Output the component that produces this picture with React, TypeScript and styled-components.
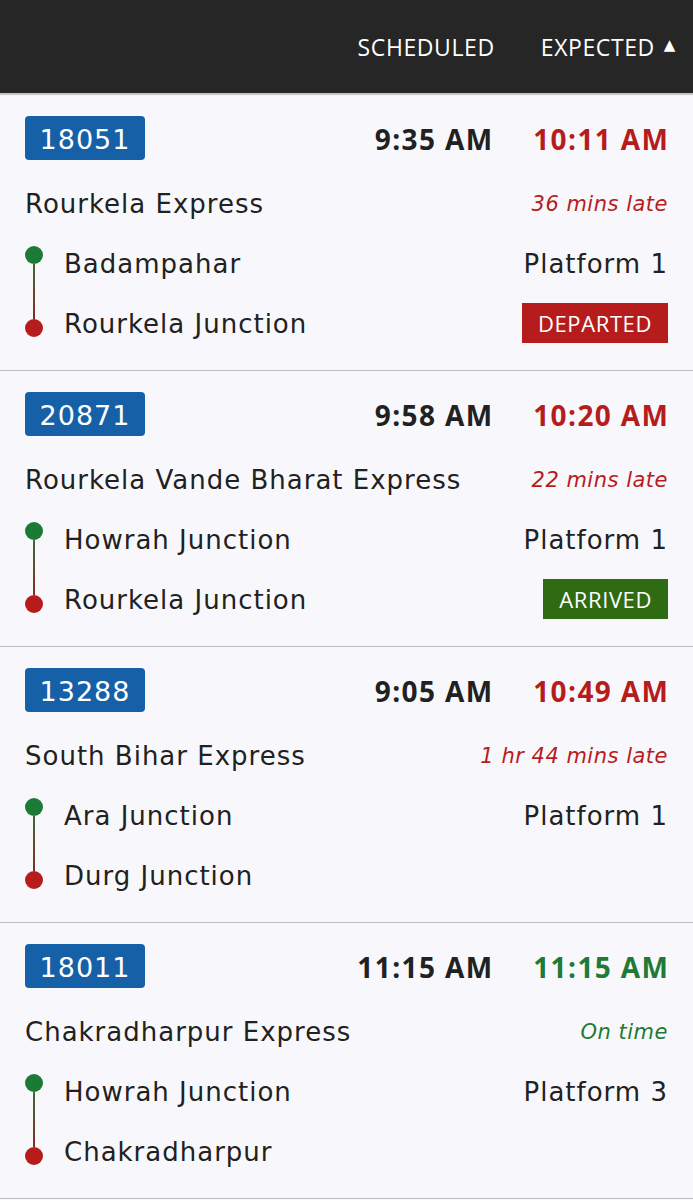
import React, { FC } from "react";
import styled, { createGlobalStyle } from "styled-components";

type Status = "departed" | "arrived" | null;

interface train {
  number: string;
  name: string;
  scheduled: string;
  expected: string;
  onTime: boolean;
  delay: string;
  from: string;
  to: string;
  platform: string;
  status: Status;
}

const trains: train[] = [
  {
    number: "18051",
    name: "Rourkela Express",
    scheduled: "9:35 AM",
    expected: "10:11 AM",
    onTime: false,
    delay: "36 mins late",
    from: "Badampahar",
    to: "Rourkela Junction",
    platform: "Platform 1",
    status: "departed",
  },
  {
    number: "20871",
    name: "Rourkela Vande Bharat Express",
    scheduled: "9:58 AM",
    expected: "10:20 AM",
    onTime: false,
    delay: "22 mins late",
    from: "Howrah Junction",
    to: "Rourkela Junction",
    platform: "Platform 1",
    status: "arrived",
  },
  {
    number: "13288",
    name: "South Bihar Express",
    scheduled: "9:05 AM",
    expected: "10:49 AM",
    onTime: false,
    delay: "1 hr 44 mins late",
    from: "Ara Junction",
    to: "Durg Junction",
    platform: "Platform 1",
    status: null,
  },
  {
    number: "18011",
    name: "Chakradharpur Express",
    scheduled: "11:15 AM",
    expected: "11:15 AM",
    onTime: true,
    delay: "On time",
    from: "Howrah Junction",
    to: "Chakradharpur",
    platform: "Platform 3",
    status: null,
  },
];

const App: FC = () => {
  return (
    <>
      <GlobalStyle />
      <StHeader>
        <span>SCHEDULED</span>
        <StSort>
          EXPECTED <StArrow>▲</StArrow>
        </StSort>
      </StHeader>

      {trains.map((t) => (
        <StCard key={t.number}>
          <StRow $height={44}>
            <StNumber>{t.number}</StNumber>
            <StTimes>
              <StTime>{t.scheduled}</StTime>
              <StTime $color={t.onTime ? "#1e7a34" : "#b71c1c"}>
                {t.expected}
              </StTime>
            </StTimes>
          </StRow>

          <StRow $height={40} $top={23}>
            <StName>{t.name}</StName>
            <StDelay $color={t.onTime ? "#1e7a34" : "#b71c1c"}>{t.delay}</StDelay>
          </StRow>

          <StRoute>
            <StTrack>
              <StDot $color="#1b7a36" />
              <StLine />
              <StDot $color="#b71c1c" />
            </StTrack>
            <StStops>
              <StRow $height={40}>
                <StStation>{t.from}</StStation>
                <StStation>{t.platform}</StStation>
              </StRow>
              <StRow $height={40}>
                <StStation>{t.to}</StStation>
                {t.status === "departed" && (
                  <StStatus $bg="#b71c1c">DEPARTED</StStatus>
                )}
                {t.status === "arrived" && (
                  <StStatus $bg="#2e6b12">ARRIVED</StStatus>
                )}
              </StRow>
            </StStops>
          </StRoute>
        </StCard>
      ))}
    </>
  );
};

export default App;

const GlobalStyle = createGlobalStyle`
  body {
    margin: 0;
    background: #f8f8fc;
    font-family: "DejaVu Sans", "Open Sans", sans-serif;
    color: #212121;
  }
`;

const StHeader = styled.div`
  height: 93px;
  background-color: #262626;
  border-bottom: 2px solid #c4c4c4;
  display: flex;
  justify-content: flex-end;
  align-items: center;
  gap: 46px;
  padding-right: 17px;
  color: #ffffff;
  font-family: "Open Sans", sans-serif;
  font-size: 23px;
  letter-spacing: 0.6px;
`;

const StSort = styled.span`
  display: flex;
  align-items: center;
`;

const StArrow = styled.span`
  font-family: "DejaVu Sans", sans-serif;
  font-size: 15px;
  margin-left: 9px;
  position: relative;
  top: -2px;
`;

const StCard = styled.div`
  padding: 21px 25px 27px 25px;
  border-bottom: 1px solid #bdbdbd;
`;

const StRow = styled.div<{ $height: number; $top?: number }>`
  display: flex;
  justify-content: space-between;
  align-items: center;
  height: ${(p) => p.$height}px;
  margin-top: ${(p) => p.$top ?? 0}px;
`;

const StNumber = styled.div`
  background-color: #1660a8;
  color: #ffffff;
  border-radius: 4px;
  width: 120px;
  height: 44px;
  display: flex;
  align-items: center;
  justify-content: center;
  font-size: 27px;
  letter-spacing: 1px;
  padding-top: 2px;
  box-sizing: border-box;
`;

const StTimes = styled.div`
  display: flex;
  gap: 41px;
  padding-top: 2px;
`;

const StTime = styled.div<{ $color?: string }>`
  color: ${(p) => p.$color ?? "#212121"};
  font-family: "Open Sans", sans-serif;
  font-size: 28px;
  font-weight: 700;
  letter-spacing: 1.4px;
  margin-right: -1.4px;
`;

const StName = styled.div`
  font-size: 26px;
  letter-spacing: 1px;
  padding-top: 2px;
`;

const StDelay = styled.div<{ $color: string }>`
  color: ${(p) => p.$color};
  font-size: 21px;
  font-style: italic;
  letter-spacing: 0.5px;
  padding-top: 2px;
`;

const StRoute = styled.div`
  display: flex;
  margin-top: 20px;
`;

const StTrack = styled.div`
  width: 18px;
  margin: 3px 21px 6px 0;
  display: flex;
  flex-direction: column;
  align-items: center;
`;

const StDot = styled.div<{ $color: string }>`
  width: 18px;
  height: 18px;
  border-radius: 50%;
  background-color: ${(p) => p.$color};
  flex-shrink: 0;
`;

const StLine = styled.div`
  flex: 1;
  width: 2px;
  background: linear-gradient(#3b6b34, #8a2a22);
`;

const StStops = styled.div`
  flex: 1;
  display: flex;
  flex-direction: column;
  gap: 20px;
`;

const StStation = styled.div`
  font-size: 26px;
  letter-spacing: 1px;
  padding-top: 2px;
`;

const StStatus = styled.div<{ $bg: string }>`
  background-color: ${(p) => p.$bg};
  color: #ffffff;
  font-family: "Open Sans", sans-serif;
  font-size: 22px;
  letter-spacing: 0.6px;
  height: 40px;
  padding: 0 16px;
  display: flex;
  align-items: center;
`;
